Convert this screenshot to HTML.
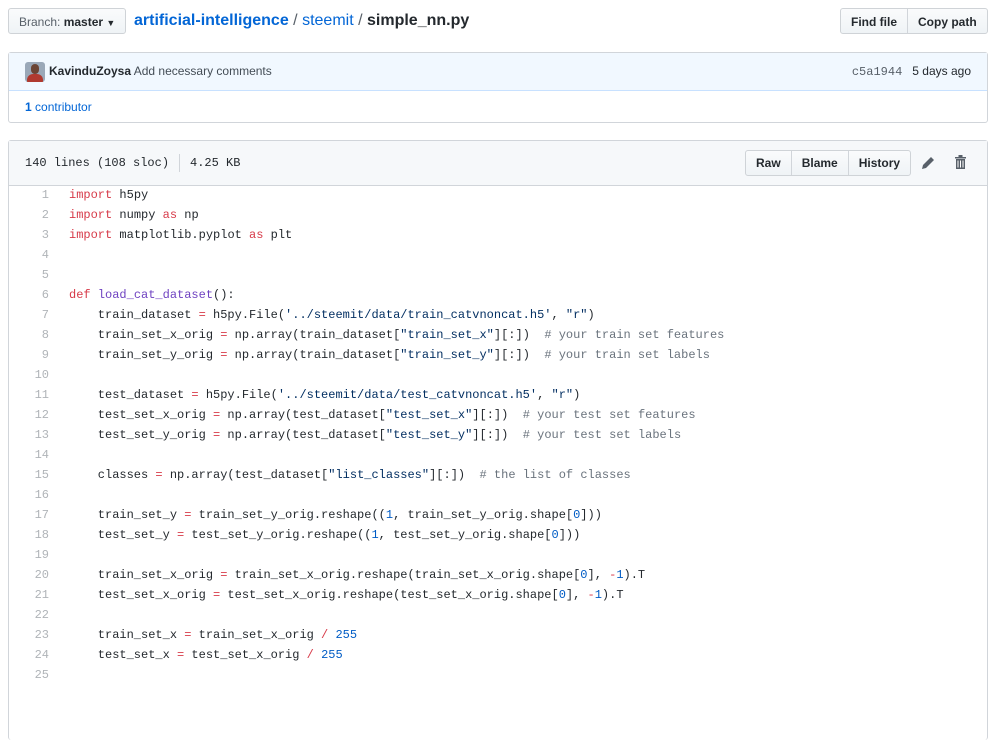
<!DOCTYPE html>
<html><head><meta charset="utf-8"><style>
body{margin:0;background:#fff;font-family:"Liberation Sans",sans-serif;font-size:14px;color:#24292e;width:997px;height:681px;overflow:hidden;position:relative}
.btn{position:absolute;border:1px solid #cfd3d7;border-radius:3px;background:linear-gradient(#fafbfc,#eff3f6);font-size:12px;font-weight:bold;height:26px;line-height:26px;box-sizing:border-box;color:#24292e}
.grp{display:flex;padding:0}
.grp span{padding:0 10px;border-left:1px solid #d1d5da}
.grp span:first-child{border-left:0}
a{color:#0366d6;text-decoration:none}
.box{position:absolute;left:8px;width:980px;border:1px solid #d1d5da;border-radius:3px;box-sizing:border-box}
.code{position:absolute;left:9px;top:185px;width:978px;font-family:"Liberation Mono",monospace;font-size:12px}
.l{height:20px;line-height:20px;white-space:pre;display:flex}
.n{width:40px;text-align:right;color:#b0b4b8;padding-right:20px;flex:none}
.k{color:#d73a49}.f{color:#6f42c1}.s{color:#032f62}.c{color:#6a737d}.m{color:#005cc5}
</style></head><body>
<div class="btn" style="left:8px;top:8px;width:118px;padding-left:10px;font-weight:normal;color:#586069">Branch: <b style="color:#24292e">master</b> <span style="font-size:9px;color:#24292e">▼</span></div>
<div style="position:absolute;left:134px;top:11px;font-size:16px;line-height:20px"><a href="#" style="font-weight:bold">artificial-intelligence</a> <span style="color:#586069">/</span> <a href="#">steemit</a> <span style="color:#586069">/</span> <b>simple_nn.py</b></div>
<div class="btn grp" style="left:840px;top:8px;width:148px"><span>Find file</span><span>Copy path</span></div>

<div class="box" style="top:52px;height:71px">
<div style="height:37px;background:#f1f8ff;border-bottom:1px solid #c8e1ff;position:relative;font-size:12px;line-height:37px">
<div style="position:absolute;left:16px;top:9px;width:20px;height:20px;border-radius:3px;background:#9aa8b8;overflow:hidden"><div style="position:absolute;left:6px;top:2px;width:8px;height:10px;border-radius:4px;background:#6b4434"></div><div style="position:absolute;left:2px;top:12px;width:16px;height:10px;border-radius:6px 6px 0 0;background:#b03a30"></div></div>
<span style="position:absolute;left:40px"><b>KavinduZoysa</b> <span style="color:#444d56">Add necessary comments</span></span>
<span style="position:absolute;right:16px"><span style="font-family:'Liberation Mono',monospace;color:#586069">c5a1944</span>&nbsp;&nbsp; 5 days ago</span>
</div>
<div style="padding-left:16px;line-height:33px;font-size:12px"><a href="#"><b>1</b> contributor</a></div>
</div>

<div class="box" style="top:140px;height:600px;border-bottom:0">
<div style="height:44px;background:#f6f8fa;border-bottom:1px solid #d1d5da;position:relative;font-family:'Liberation Mono',monospace;font-size:12px;line-height:44px">
<span style="position:absolute;left:16px">140 lines (108 sloc)</span>
<span style="position:absolute;left:170px;top:13px;height:18px;border-left:1px solid #d1d5da"></span>
<span style="position:absolute;left:181px">4.25 KB</span>
<div class="btn grp" style="left:736px;top:9px;width:166px;font-family:'Liberation Sans',sans-serif;line-height:24px"><span>Raw</span><span>Blame</span><span>History</span></div>
<svg style="position:absolute;left:911px;top:14px" width="16" height="16" viewBox="0 0 16 16"><path d="M2 14l1-4 8-8 3 3-8 8z M2 14l3-1" fill="#586069"/></svg>
<svg style="position:absolute;left:945px;top:13px" width="13" height="16" viewBox="0 0 13 16"><path d="M1 3h11v1.5H1zM4.5 1h4v2h-4zM2 5h9v10H2z" fill="#586069"/><path d="M4 6.5v7M6.5 6.5v7M9 6.5v7" stroke="#fff" stroke-width="1"/></svg>
</div>
</div>

<div class="code">
<div class="l"><span class="n">1</span><span><span class="k">import</span> h5py</span></div>
<div class="l"><span class="n">2</span><span><span class="k">import</span> numpy <span class="k">as</span> np</span></div>
<div class="l"><span class="n">3</span><span><span class="k">import</span> matplotlib.pyplot <span class="k">as</span> plt</span></div>
<div class="l"><span class="n">4</span><span></span></div>
<div class="l"><span class="n">5</span><span></span></div>
<div class="l"><span class="n">6</span><span><span class="k">def</span> <span class="f">load_cat_dataset</span>():</span></div>
<div class="l"><span class="n">7</span><span>    train_dataset <span class="k">=</span> h5py.File(<span class="s">'../steemit/data/train_catvnoncat.h5'</span>, <span class="s">"r"</span>)</span></div>
<div class="l"><span class="n">8</span><span>    train_set_x_orig <span class="k">=</span> np.array(train_dataset[<span class="s">"train_set_x"</span>][:])  <span class="c"># your train set features</span></span></div>
<div class="l"><span class="n">9</span><span>    train_set_y_orig <span class="k">=</span> np.array(train_dataset[<span class="s">"train_set_y"</span>][:])  <span class="c"># your train set labels</span></span></div>
<div class="l"><span class="n">10</span><span></span></div>
<div class="l"><span class="n">11</span><span>    test_dataset <span class="k">=</span> h5py.File(<span class="s">'../steemit/data/test_catvnoncat.h5'</span>, <span class="s">"r"</span>)</span></div>
<div class="l"><span class="n">12</span><span>    test_set_x_orig <span class="k">=</span> np.array(test_dataset[<span class="s">"test_set_x"</span>][:])  <span class="c"># your test set features</span></span></div>
<div class="l"><span class="n">13</span><span>    test_set_y_orig <span class="k">=</span> np.array(test_dataset[<span class="s">"test_set_y"</span>][:])  <span class="c"># your test set labels</span></span></div>
<div class="l"><span class="n">14</span><span></span></div>
<div class="l"><span class="n">15</span><span>    classes <span class="k">=</span> np.array(test_dataset[<span class="s">"list_classes"</span>][:])  <span class="c"># the list of classes</span></span></div>
<div class="l"><span class="n">16</span><span></span></div>
<div class="l"><span class="n">17</span><span>    train_set_y <span class="k">=</span> train_set_y_orig.reshape((<span class="m">1</span>, train_set_y_orig.shape[<span class="m">0</span>]))</span></div>
<div class="l"><span class="n">18</span><span>    test_set_y <span class="k">=</span> test_set_y_orig.reshape((<span class="m">1</span>, test_set_y_orig.shape[<span class="m">0</span>]))</span></div>
<div class="l"><span class="n">19</span><span></span></div>
<div class="l"><span class="n">20</span><span>    train_set_x_orig <span class="k">=</span> train_set_x_orig.reshape(train_set_x_orig.shape[<span class="m">0</span>], <span class="k">-</span><span class="m">1</span>).T</span></div>
<div class="l"><span class="n">21</span><span>    test_set_x_orig <span class="k">=</span> test_set_x_orig.reshape(test_set_x_orig.shape[<span class="m">0</span>], <span class="k">-</span><span class="m">1</span>).T</span></div>
<div class="l"><span class="n">22</span><span></span></div>
<div class="l"><span class="n">23</span><span>    train_set_x <span class="k">=</span> train_set_x_orig <span class="k">/</span> <span class="m">255</span></span></div>
<div class="l"><span class="n">24</span><span>    test_set_x <span class="k">=</span> test_set_x_orig <span class="k">/</span> <span class="m">255</span></span></div>
<div class="l"><span class="n">25</span><span></span></div>
</div>
</body></html>
